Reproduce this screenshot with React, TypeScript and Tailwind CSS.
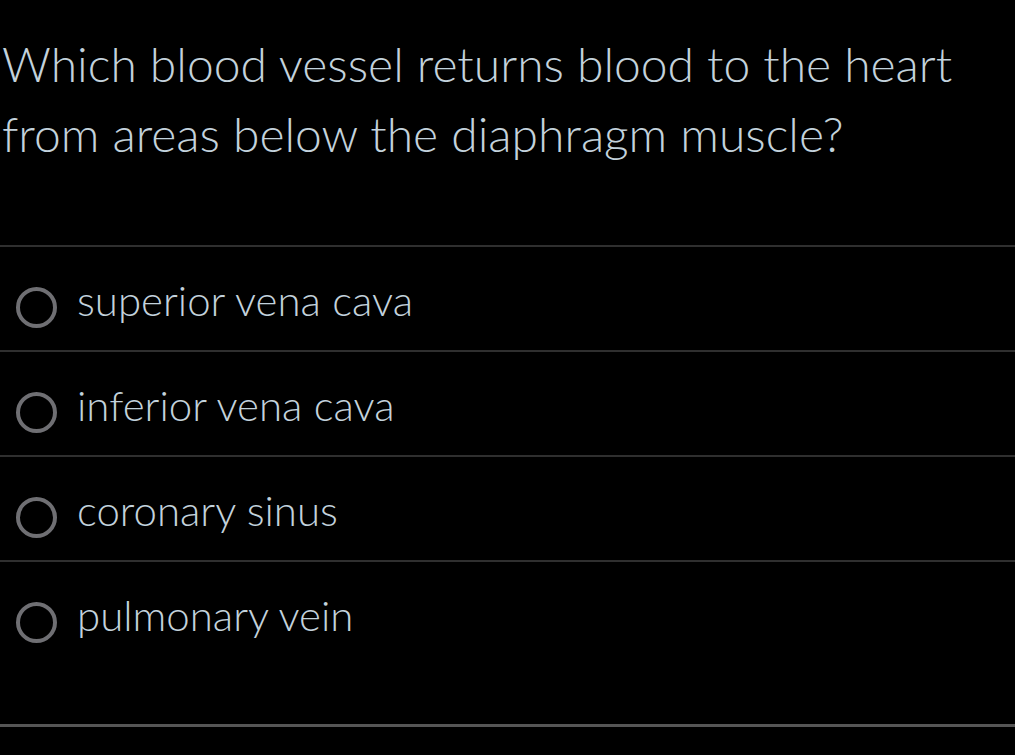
import React from "react";

const options = [
  "superior vena cava",
  "inferior vena cava",
  "coronary sinus",
  "pulmonary vein",
];

function Radio() {
  return (
    <div className="mt-[8px] h-[41px] w-[41px] shrink-0 rounded-full border-[4px] border-[#6f6f73]" />
  );
}

export default function App() {
  return (
    <div
      className="min-h-[755px] w-[1015px] bg-black text-[#c3d2dc]"
      style={{ fontFamily: "'Lato Light', Lato, 'Open Sans', sans-serif" }}
    >
      {/* Question */}
      <div className="pl-[2px] pt-[29px] text-[48px] leading-[70px] font-thin">
        Which blood vessel returns blood to the heart
        <br />
        from areas below the diaphragm muscle?
      </div>

      {/* Options */}
      <div className="mt-[76px]">
        {options.map((opt, i) => (
          <div
            key={opt}
            className={
              "flex items-start gap-[20px] border-t-2 border-[#2f2f2f] pl-[16px] pt-[32px] " +
              (i === options.length - 1 ? "h-[164px]" : "h-[105px]")
            }
          >
            <Radio />
            <span className="text-[42px] leading-[42px] font-light">{opt}</span>
          </div>
        ))}
        <div className="h-[3px] bg-[#555555]" />
      </div>
    </div>
  );
}
